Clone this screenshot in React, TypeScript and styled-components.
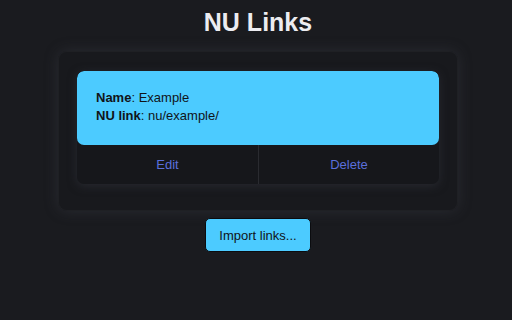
import styled, { createGlobalStyle } from 'styled-components';

const GlobalStyle = createGlobalStyle`
  html, body {
    margin: 0;
    padding: 0;
    background: #1a1b1f;
  }
  body {
    font-family: "Liberation Sans", Arial, sans-serif;
    color: #e6e6ea;
  }
`;

const links = [{ name: 'Example', link: 'nu/example/' }];

const App = () => {
  return (
    <Page>
      <GlobalStyle />
      <Title>NU Links</Title>
      <Panel>
        {links.map((item) => (
          <LinkCard key={item.link}>
            <CardInfo>
              <Line>
                <b>Name</b>: {item.name}
              </Line>
              <Line>
                <b>NU link</b>: {item.link}
              </Line>
            </CardInfo>
            <CardActions>
              <ActionButton>Edit</ActionButton>
              <ActionButton divided>Delete</ActionButton>
            </CardActions>
          </LinkCard>
        ))}
      </Panel>
      <ImportButton>Import links...</ImportButton>
    </Page>
  );
};

export default App;

const Page = styled.div`
  width: 512px;
  height: 320px;
  display: flex;
  flex-direction: column;
  align-items: center;
  box-sizing: border-box;
  padding: 7px 0 0 4px;
  overflow: hidden;
`;

const Title = styled.h1`
  margin: 0;
  font-size: 25px;
  line-height: 30px;
  font-weight: bold;
  color: #ececf0;
`;

const Panel = styled.div`
  width: 400px;
  box-sizing: border-box;
  margin-top: 14px;
  padding: 20px 19px 27px;
  background: #18191d;
  border-radius: 9px;
  box-shadow: 0 0 14px rgba(60, 62, 70, 0.45), inset 0 0 0 1px rgba(255, 255, 255, 0.03);
`;

const LinkCard = styled.div`
  border-radius: 7px;
  overflow: hidden;
  background: #16171b;
  box-shadow: 0 2px 10px rgba(50, 52, 60, 0.6);
`;

const CardInfo = styled.div`
  background: #4ccbff;
  padding: 18px 19px 20px;
  border-radius: 7px;
  color: #111418;
  font-size: 13px;
  line-height: 18px;
`;

const Line = styled.div`
  white-space: nowrap;
`;

const CardActions = styled.div`
  display: grid;
  grid-template-columns: 1fr 1fr;
  height: 39px;
`;

const ActionButton = styled.div<{ divided?: boolean }>`
  display: flex;
  align-items: center;
  justify-content: center;
  font-size: 13px;
  color: #5b6fdc;
  border-left: ${(p) => (p.divided ? '1px solid #2a2b30' : 'none')};
`;

const ImportButton = styled.button`
  margin-top: 7px;
  width: 106px;
  height: 34px;
  background: #4ccbff;
  color: #111418;
  border: 1px solid #0b0c0f;
  border-radius: 5px;
  font-family: "Liberation Sans", Arial, sans-serif;
  font-size: 13px;
  padding: 0;
`;
